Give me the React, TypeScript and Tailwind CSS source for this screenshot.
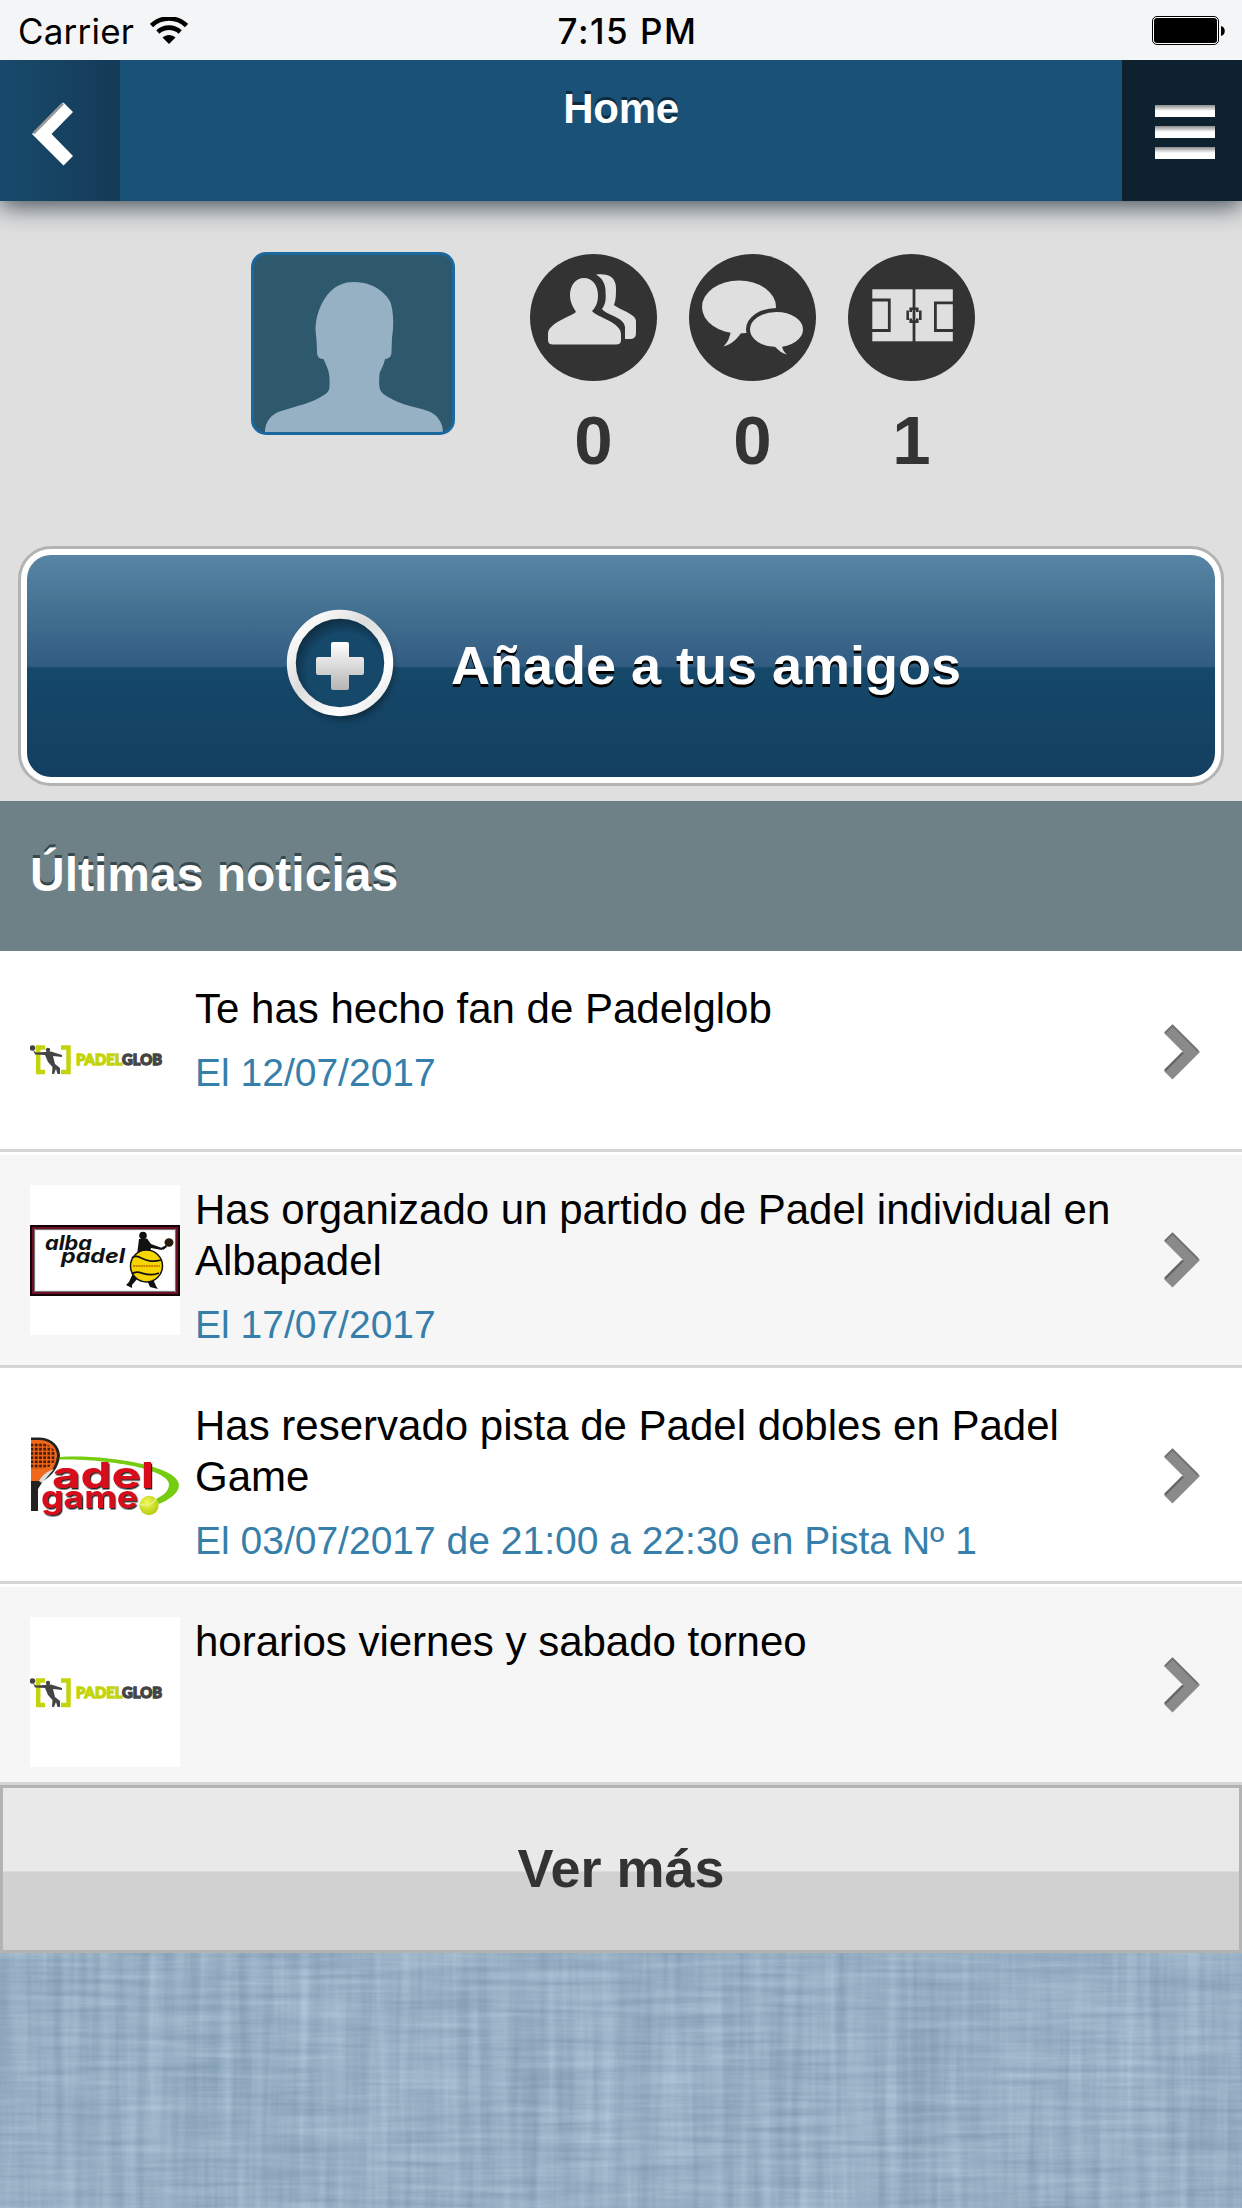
import type { ReactNode } from 'react';

type NewsItem = {
  id: number;
  logo: ReactNode;
  title: string;
  detail?: string;
};

function WifiIcon() {
  return (
    <svg width="38" height="28" viewBox="0 0 38 28" fill="none">
      <path d="M1.5 8.5C11.5 -0.8 26.500 -0.8 36.500 8.500" stroke="#000" strokeWidth="4.600" />
      <path d="M7.800 15C14.300 9.200 23.700 9.200 30.200 15" stroke="#000" strokeWidth="4.600" />
      <path d="M12.500 20.500C16.300 17 21.700 17 25.500 20.500L19 27Z" fill="#000" />
    </svg>
  );
}

function BatteryIcon() {
  return (
    <svg width="73" height="29" viewBox="0 0 73 29">
      <rect x="0.500" y="0.500" width="66" height="28" rx="4.500" fill="#fff" stroke="#000" />
      <rect x="2" y="2" width="63" height="25" rx="3" fill="#000" />
      <path d="M69 10C74 11 74 19 69 20Z" fill="#000" />
    </svg>
  );
}

function AvatarIcon() {
  return (
    <svg className="block h-full w-full" viewBox="0 0 198 177">
      <path
        d="M11 177C11 167 17 159 27 156C43 151 58 148 70 140C75 137 75.500 134 75.500 130C76 122 75 117 73 112L69.500 104C64 104.500 63 100 63 97L62.500 85L61.500 75C61.500 62 66 49 74 39C82 30 90 27 100 27C112 27 121 31 127 36C132 40 136 45 137 49C139.500 58 140 70 138 83L137.500 97C137.500 101 136 103.500 131 104C130 110 126 116 125.500 119C125 126 125 130 126 134C127 138 131 140 136 143C148 150 162 152 174 156C183 159 189 168 189 177Z"
        fill="#96b0c4"
      />
    </svg>
  );
}

function FriendsIcon() {
  return (
    <svg className="block" width="127" height="127" viewBox="0 0 127 127">
      <circle cx="63.500" cy="63.500" r="63.500" fill="#333" />
      <g fill="#dfdfdf">
        <path d="M46 58C43 53 40 48 40 41C40 31 46 24 54 24S68 31 68 41C68 48 66 53 62 57C66 63 91 68 91 80V86Q91 90.500 86 90.500H23Q18 90.500 18 86V80C18 69 40 63 46 58Z" />
        <path d="M66 20.500C78 19 86 23 86 34C86 40 86 46 84 51C90 56 106 60 106 67V79Q106 85 100 85H95V73C94 63 76 61 72 55C77 48 75.500 42 75.500 36C75 29 72 24 66 20.500Z" />
      </g>
    </svg>
  );
}

function MessagesIcon() {
  return (
    <svg className="block" width="127" height="127" viewBox="0 0 127 127">
      <circle cx="63.500" cy="63.500" r="63.500" fill="#333" />
      <g fill="#dfdfdf">
        <ellipse cx="50" cy="53" rx="37" ry="26.500" />
        <path d="M42 76C41 83 39 88 34.500 92.500C43 90 48 85 52 79L60 77L55 70Z" />
        <ellipse cx="87.500" cy="75.500" rx="28.500" ry="19.500" stroke="#333" strokeWidth="4" />
        <path d="M84 91C88 94 91 99 98 100.500C94 97 93 94 93 90Z" />
      </g>
    </svg>
  );
}

function CourtIcon() {
  return (
    <svg className="block" width="127" height="127" viewBox="0 0 127 127">
      <circle cx="63.500" cy="63.500" r="63.500" fill="#333" />
      <rect x="24.300" y="35.300" width="80.500" height="52" fill="#dfdfdf" />
      <g fill="none" stroke="#333" strokeWidth="2.800">
        <path d="M24 46H41.300V76.500H24" />
        <path d="M105 48.800H87.400V76.500H105" />
        <path d="M66 35V88" />
        <path d="M61.500 54.800H70.500M61.500 67.600H70.500M59.700 56.500V66M72.300 56.500V66M62.700 54V58M69.300 54V58M62.700 64.500V68.500M69.300 64.500V68.500" strokeWidth="2.600" />
      </g>
    </svg>
  );
}

function PlusIcon() {
  return (
    <svg className="mb-[6px] overflow-visible" width="108" height="108" viewBox="0 0 108 108">
      <defs>
        <linearGradient id="ring" x1="0" y1="0" x2="1" y2="1">
          <stop offset="0" stopColor="#fff" />
          <stop offset="0.150" stopColor="#f8f8f8" />
          <stop offset="0.420" stopColor="#dcdcdc" />
          <stop offset="0.750" stopColor="#fff" />
          <stop offset="1" stopColor="#ddd" />
        </linearGradient>
        <linearGradient id="cross" x1="0" y1="0" x2="0" y2="1">
          <stop offset="0" stopColor="#fff" />
          <stop offset="1" stopColor="#b5b5b5" />
        </linearGradient>
        <radialGradient id="well" cx="0.550" cy="0.580" r="0.560">
          <stop offset="0.700" stopColor="#154869" />
          <stop offset="1" stopColor="#0f2c41" />
        </radialGradient>
        <filter id="drop" x="-30%" y="-30%" width="170%" height="170%">
          <feDropShadow dx="4" dy="7" stdDeviation="5" floodColor="#000" floodOpacity="0.500" />
        </filter>
      </defs>
      <circle cx="54" cy="54" r="48" fill="#154869" filter="url(#drop)" />
      <circle cx="54" cy="54" r="48" fill="url(#well)" />
      <circle cx="54" cy="54" r="48.700" fill="none" stroke="url(#ring)" strokeWidth="9" />
      <path
        d="M47 33H61Q63 33 63 35V48H76Q78 48 78 50V64Q78 66 76 66H63V79Q63 81 61 81H47Q45 81 45 79V66H32Q30 66 30 64V50Q30 48 32 48H45V35Q45 33 47 33Z"
        fill="url(#cross)"
      />
    </svg>
  );
}

function ChevronRight() {
  return (
    <svg className="mr-[42px] shrink-0" width="36" height="56" viewBox="0 0 36 56">
      <path d="M8.500 0.500L36 28L8.500 55.500L0 47L19 28L0 9Z" fill="#8a8a8a" />
      <path d="M1 9L8.500 1.500L34 27" fill="none" stroke="#727272" strokeWidth="1.800" />
      <path d="M1 46.500L19 28.500" stroke="#636363" strokeWidth="2.400" />
    </svg>
  );
}

function PadelglobLogo() {
  return (
    <svg className="block bg-white" width="150" height="150" viewBox="0 0 150 150">
      <g fill="none" stroke="#c3d40c" strokeWidth="4.500">
        <path d="M15 63.500H8.200V88H15" />
        <path d="M31 63.500H38.500V88H31" />
      </g>
      <g fill="#444">
        <circle cx="2.500" cy="64" r="2.800" />
        <circle cx="18" cy="66" r="2.200" />
        <path d="M3 66L6 68.500L15 68L21 67.500L32 71V73L23 72L25 80L30 84L30 90L27.500 90L26 85L24 90H22L22.500 83L18 78L15 71L5 70.500Z" />
      </g>
      <text x="46" y="81" fontFamily="Lato, 'Liberation Sans', sans-serif" fontSize="15" fontWeight="900" strokeWidth="1.300" textLength="86" lengthAdjust="spacingAndGlyphs">
        <tspan fill="#c3d40c" stroke="#c3d40c">PADEL</tspan>
        <tspan fill="#444" stroke="#444">GLOB</tspan>
      </text>
    </svg>
  );
}

function AlbapadelLogo() {
  return (
    <svg className="block bg-white" width="150" height="150" viewBox="0 0 150 150">
      <rect x="1.200" y="41.200" width="147.600" height="68.600" fill="#fff" stroke="#120306" strokeWidth="2.400" />
      <rect x="3" y="43" width="144" height="65" fill="none" stroke="#6d1026" strokeWidth="2" />
      <rect x="4.600" y="44.600" width="140.800" height="61.800" fill="none" stroke="#666" strokeWidth="1" />
      <g fontFamily="Inter, 'Liberation Sans', sans-serif" fontSize="20" fontWeight="700" fontStyle="italic" fill="#111">
        <text x="15" y="65" textLength="47" lengthAdjust="spacingAndGlyphs">alba</text>
        <text x="31" y="78" textLength="64" lengthAdjust="spacingAndGlyphs">padel</text>
      </g>
      <g fill="#111">
        <circle cx="113" cy="50.500" r="3.800" />
        <path d="M109 54L117 53.500L121 59L132 63V65L121 63L119 70L107 70Z" />
        <ellipse cx="139" cy="57.500" rx="4.500" ry="4.200" fill="#2a1a0a" />
        <path d="M131 63L136 60L137 62L133 65Z" />
        <path d="M103 88L108 93L102 100V103L96 100L99 97Z" />
        <path d="M117 95L123 94L126 101L128 104L120 102Z" />
      </g>
      <circle cx="116.500" cy="81" r="16" fill="#f7d500" stroke="#111" strokeWidth="1.500" />
      <path d="M102 73C109 67 114 80 131 75M102 89C109 83 116 94 129 88" fill="none" stroke="#111" strokeWidth="1.700" />
      <path d="M103 81H130" stroke="#a62a10" strokeWidth="1.200" strokeDasharray="2 0.600" />
    </svg>
  );
}

function PadelGameLogo() {
  return (
    <svg className="block bg-white" width="150" height="150" viewBox="0 0 150 150">
      <defs>
        <pattern id="holes" width="4.200" height="4.200" patternUnits="userSpaceOnUse">
          <rect x="0.600" y="0.600" width="2.800" height="2.800" fill="#4a1c06" />
        </pattern>
        <radialGradient id="ball" cx="0.400" cy="0.350" r="0.700">
          <stop offset="0" stopColor="#f2f95a" />
          <stop offset="1" stopColor="#b3c90a" />
        </radialGradient>
        <filter id="lettering">
          <feDropShadow dx="1.200" dy="1.500" stdDeviation="0.600" floodColor="#111" floodOpacity="0.900" />
        </filter>
      </defs>
      <path d="M1 36.500H10C22 37 30 45 30 55C29 66 22 75 13 80L8 88V110H1Z" fill="#222" />
      <path d="M1 39H9C20 39 27 46 27 55C26 66 18 76 9 80H1Z" fill="#f0681a" />
      <path d="M1 42H14L20 45L25 50V60L19 66L11 68H1Z" fill="url(#holes)" />
      <path d="M9 80C12 74 18 70 24 68L12 82Z" fill="#ddd" />
      <path d="M30 56C70 53 149 64 149 84C149 92 139 99 129 103L126 98C132 95 139 91 139 83C138 69 84 58 30 58.500Z" fill="#76cc10" />
      <g fontFamily="Inter, 'Liberation Sans', sans-serif" fontWeight="700" fill="#d80f1c" filter="url(#lettering)">
        <text x="22" y="87" fontSize="36" textLength="102" lengthAdjust="spacingAndGlyphs">adel</text>
        <text x="11" y="106.500" fontSize="31" textLength="97" lengthAdjust="spacingAndGlyphs">game</text>
      </g>
      <circle cx="119" cy="104.500" r="9.700" fill="url(#ball)" />
      <path d="M110 103C116 106 123 103 126 98" fill="none" stroke="#e8f59a" strokeWidth="1.200" />
    </svg>
  );
}

// Woven fabric behind the page
function FabricBackground() {
  return (
    <svg className="block h-full w-full" preserveAspectRatio="none">
      <filter id="weft" x="0" y="0" width="100%" height="100%" colorInterpolationFilters="sRGB">
        <feTurbulence type="fractalNoise" baseFrequency="0.008 0.150" numOctaves="3" seed="4" />
        <feColorMatrix values="0.300 0 0 0 0.445  0.280 0 0 0 0.550  0.260 0 0 0 0.640  0 0 0 0 1" />
      </filter>
      <filter id="warp" x="0" y="0" width="100%" height="100%" colorInterpolationFilters="sRGB">
        <feTurbulence type="fractalNoise" baseFrequency="0.080 0.004" numOctaves="3" seed="9" />
        <feColorMatrix values="0.300 0 0 0 0.445  0.280 0 0 0 0.550  0.260 0 0 0 0.640  0 0 0 0 1" />
      </filter>
      <rect width="100%" height="100%" filter="url(#weft)" />
      <rect width="100%" height="100%" filter="url(#warp)" opacity="0.500" />
    </svg>
  );
}

const stats = [
  { id: 'friends', icon: <FriendsIcon />, value: 0 },
  { id: 'messages', icon: <MessagesIcon />, value: 0 },
  { id: 'courts', icon: <CourtIcon />, value: 1 },
];

const news: NewsItem[] = [
  { id: 1, logo: <PadelglobLogo />, title: 'Te has hecho fan de Padelglob', detail: 'El 12/07/2017' },
  { id: 2, logo: <AlbapadelLogo />, title: 'Has organizado un partido de Padel individual en Albapadel', detail: 'El 17/07/2017' },
  { id: 3, logo: <PadelGameLogo />, title: 'Has reservado pista de Padel dobles en Padel Game', detail: 'El 03/07/2017 de 21:00 a 22:30 en Pista Nº 1' },
  { id: 4, logo: <PadelglobLogo />, title: 'horarios viernes y sabado torneo' },
];

function StatusBar() {
  return (
    <div className="relative z-20 grid h-[60px] shrink-0 grid-cols-3 items-center bg-[#f4f5f6] font-[Inter,sans-serif] text-[35px] text-black">
      <div className="flex items-center gap-[16px] pt-[2px] pl-[18px]">
        <span className="tracking-[0.2px]">Carrier</span>
        <WifiIcon />
      </div>
      <div className="pt-[3px] pl-[13px] text-center font-medium tracking-[1.500px]">7:15 PM</div>
      <div className="flex justify-end pt-px pr-[17px]">
        <BatteryIcon />
      </div>
    </div>
  );
}

function Header() {
  return (
    <header className="relative z-10 flex h-[141px] shrink-0 bg-[#1a5177] shadow-[0_5px_24px_rgba(10,25,40,0.75)]">
      <button type="button" aria-label="Atrás" className="flex w-[120px] items-center bg-linear-to-r from-[#184a6b] to-[#143b58] pt-[6px] pl-[32px]">
        <svg width="41" height="64" viewBox="0 0 41 64">
          <path d="M31.500 0.500L41 10L19.500 32L41 54L31.500 63.500L0 32Z" fill="#fff" />
          <path d="M31 1.500L1.500 31.500" stroke="#999" strokeWidth="2.500" />
        </svg>
      </button>
      <h1 className="flex-1 pt-[23px] text-center text-[42px] leading-[51px] font-bold tracking-[-0.300px] text-white [text-shadow:0_-3px_0_#0d2b40]">Home</h1>
      <button type="button" aria-label="Menú" className="flex w-[120px] flex-col gap-[9px] bg-[#0d212e] pt-[45px] pl-[33px]">
        <span className="h-[12px] w-[60px] bg-white bg-linear-to-b from-[#8c8c8c] to-white to-50%" />
        <span className="h-[12px] w-[60px] bg-white bg-linear-to-b from-[#8c8c8c] to-white to-50%" />
        <span className="h-[12px] w-[60px] bg-white bg-linear-to-b from-[#8c8c8c] to-white to-50%" />
      </button>
    </header>
  );
}

export default function App() {
  return (
    <div className="flex h-[2208px] w-[1242px] flex-col overflow-hidden font-['Liberation_Sans',Arial,sans-serif]">
      <StatusBar />
      <Header />

      <section className="h-[600px] shrink-0 bg-[#dfdfdf] px-[18px] pt-[51px]">
        <div className="flex h-[294px] items-start pl-[233px]">
          <div className="h-[183px] w-[204px] overflow-hidden rounded-[15px] border-3 border-[#1a689d] bg-[#2e586c]">
            <AvatarIcon />
          </div>
          <div className="ml-[75px] flex gap-[32px] pt-[2px]">
            {stats.map((stat) => (
              <div key={stat.id} className="flex w-[127px] flex-col items-center">
                {stat.icon}
                <span className="mt-[21px] text-[69px] leading-[77px] font-bold text-[#333]">{stat.value}</span>
              </div>
            ))}
          </div>
        </div>

        <button type="button" className="block h-[240px] w-full rounded-[33px] border-3 border-[#b3b3b3] bg-white p-[6px]">
          <span className="flex h-full items-center rounded-[24px] bg-[linear-gradient(to_bottom,#5885a5_0%,#477594_20%,#325c82_50%,#154869_51%,#143f60_100%)] pl-[259px]">
            <PlusIcon />
            <span className="mb-[3px] ml-[57px] text-[54px] leading-[60px] font-bold whitespace-nowrap text-white [text-shadow:0_3px_0_#000]">Añade a tus amigos</span>
          </span>
        </button>
      </section>

      <h2 className="h-[150px] shrink-0 bg-[#6e8186] pt-[44px] pl-[30px] text-[48px] leading-[60px] font-bold text-white [text-shadow:0_-3px_0_#37474c]">Últimas noticias</h2>

      <ul className="shrink-0">
        {news.map((item) => (
          <li key={item.id} className="flex min-h-[201px] items-center border-t-3 border-b-3 border-t-white border-b-[#d5d5d5] bg-white even:bg-[#f6f6f6]">
            <div className="self-start pt-[30px] pl-[30px]">{item.logo}</div>
            <div className="flex-1 self-start pt-[29px] pr-[40px] pb-[15px] pl-[15px]">
              <p className="text-[42px] leading-[51px] text-black">{item.title}</p>
              {item.detail && <p className="mt-[13px] text-[39px] leading-[51px] text-[#367fab]">{item.detail}</p>}
            </div>
            <ChevronRight />
          </li>
        ))}
      </ul>

      <button type="button" className="h-[168px] shrink-0 border-3 border-[#b3b3b3] bg-[linear-gradient(to_bottom,#e9e9e9_51%,#d1d1d1_52%)] pb-[2px] text-[54px] font-bold text-[#333]">
        Ver más
      </button>

      <div className="min-h-0 flex-1 bg-[#97afc5]">
        <FabricBackground />
      </div>
    </div>
  );
}
